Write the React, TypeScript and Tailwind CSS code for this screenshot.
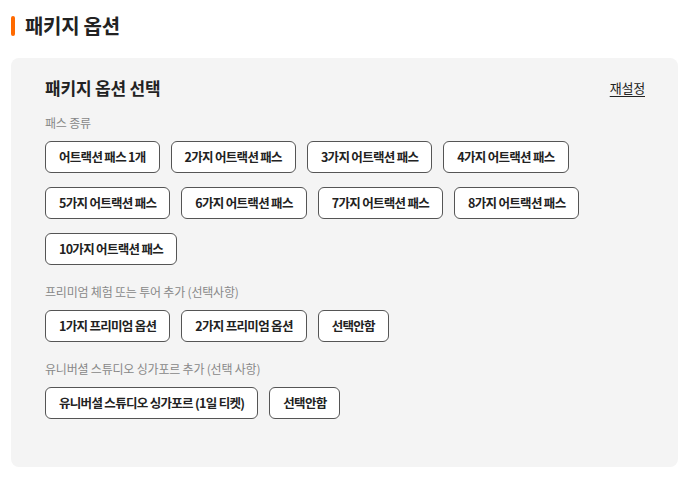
const font = '"Noto Sans CJK KR", "Noto Sans", sans-serif';

type Section = { label: string; options: string[] };

const sections: Section[] = [
  {
    label: '패스 종류',
    options: [
      '어트랙션 패스 1개',
      '2가지 어트랙션 패스',
      '3가지 어트랙션 패스',
      '4가지 어트랙션 패스',
      '5가지 어트랙션 패스',
      '6가지 어트랙션 패스',
      '7가지 어트랙션 패스',
      '8가지 어트랙션 패스',
      '10가지 어트랙션 패스',
    ],
  },
  {
    label: '프리미엄 체험 또는 투어 추가 (선택사항)',
    options: ['1가지 프리미엄 옵션', '2가지 프리미엄 옵션', '선택안함'],
  },
  {
    label: '유니버셜 스튜디오 싱가포르 추가 (선택 사항)',
    options: ['유니버셜 스튜디오 싱가포르 (1일 티켓)', '선택안함'],
  },
];

export default function App() {
  return (
    <div className="w-[694px] h-[491px] bg-white pl-[11px] pr-[16px] pt-[14px]" style={{ fontFamily: font }}>
      {/* Heading */}
      <div className="flex items-center gap-[10px] h-[24px]">
        <div className="w-[4px] h-[20px] rounded-full bg-[#ff6a00]" />
        <h2 className="text-[20px] font-bold text-[#222] leading-none tracking-[-0.3px]">패키지 옵션</h2>
      </div>

      {/* Card */}
      <div className="mt-[20px] h-[409px] rounded-[8px] bg-[#f4f4f4] pl-[34px] pr-[33px] pt-[18px]">
        <div className="flex items-center justify-between h-[24px]">
          <h3 className="text-[17px] font-bold text-[#222] tracking-[-0.2px]">패키지 옵션 선택</h3>
          <button className="text-[13px] text-[#222] underline underline-offset-[3px] tracking-[-0.2px]">재설정</button>
        </div>

        <div className="mt-[14px] flex flex-col gap-[18px]">
          {sections.map((s) => (
            <div key={s.label}>
              <div className="text-[12px] leading-[18px] text-[#888] tracking-[-0.2px]">{s.label}</div>
              <div className="mt-[9px] flex flex-wrap gap-x-[11px] gap-y-[14px]">
                {s.options.map((o, i) => (
                  <button
                    key={i}
                    className="h-[32px] px-[13px] rounded-[6px] border border-[#555] bg-white text-[12.5px] font-bold text-[#222] tracking-[-0.7px]"
                  >
                    {o}
                  </button>
                ))}
              </div>
            </div>
          ))}
        </div>
      </div>
    </div>
  );
}
